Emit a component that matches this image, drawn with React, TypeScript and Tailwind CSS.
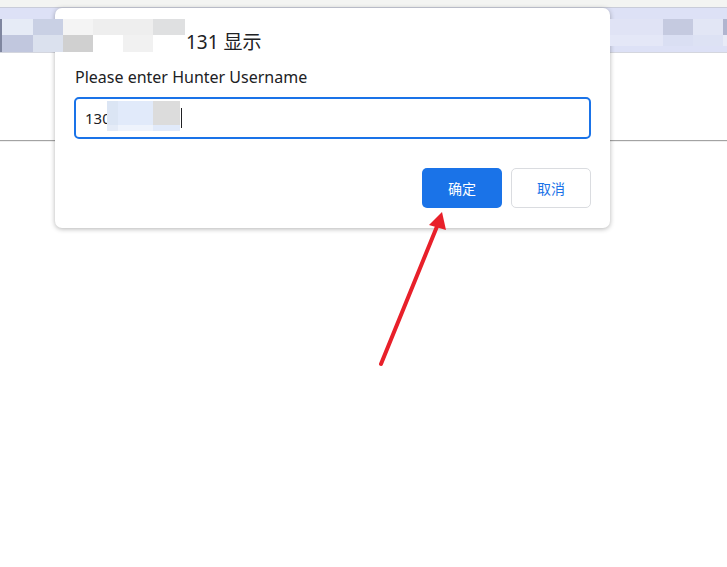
import React from "react";

const LEFT_TOP = ["#e6ebf6", "#c9d0e4", "#f4f4f4", "#eeeeee", "#eeeeee", "#dfe0e1"];
const LEFT_BOTTOM = ["#c1c7de", "#dbe1ee", "#d0d0d0", "#ffffff", "#f1f1f1", "#ffffff"];
const LEFT_W = [33, 30, 30, 30, 30, 32];

const RIGHT_TOP = ["#e0e3f5", "#e0e3f5", "#c5cae0", "#e2e6f5", "#b0b5cf"];
const RIGHT_BOTTOM = ["#e4e7f7", "#e4e7f7", "#dadff3", "#dde2f4", "#e8ebf7"];
const RIGHT_W = [23, 30, 30, 30, 4];

function Mosaic({ widths, top, bottom, h1, h2 }: { widths: number[]; top: string[]; bottom: string[]; h1: number; h2: number }) {
  return (
    <div className="flex flex-col">
      <div className="flex">
        {widths.map((w, i) => (
          <div key={i} style={{ width: w, height: h1, background: top[i] }} />
        ))}
      </div>
      <div className="flex">
        {widths.map((w, i) => (
          <div key={i} style={{ width: w, height: h2, background: bottom[i] }} />
        ))}
      </div>
    </div>
  );
}

export default function App() {
  return (
    <div className="relative w-[727px] h-[567px] overflow-hidden bg-white" style={{ fontFamily: '"Segoe UI", "Noto Sans", "Noto Sans CJK SC", sans-serif' }}>
      {/* browser page behind the dialog */}
      <div className="h-[7px] bg-[#f3f4f2]" />
      <div className="h-[46px] bg-[#dde1f6] border-t border-[#c9ccd9] border-b border-b-[#d4d6de]" />
      <div className="h-[88px] bg-white border-b border-[#a3a3a3]" />
      <div className="h-px bg-[#efefef]" />

      {/* redaction blocks */}
      <div className="absolute left-0 top-[19px] z-20">
        <Mosaic widths={LEFT_W} top={LEFT_TOP} bottom={LEFT_BOTTOM} h1={16} h2={17} />
        <div className="absolute left-0 top-0 w-[2px] h-[33px] bg-[#7f869f]" />
      </div>
      <div className="absolute left-[610px] top-[19px] z-20">
        <Mosaic widths={RIGHT_W} top={RIGHT_TOP} bottom={RIGHT_BOTTOM} h1={16} h2={11} />
      </div>

      {/* dialog */}
      <div className="absolute left-[55px] top-[8px] z-10 w-[555px] h-[220px] rounded-[7px] bg-white shadow-[0_1px_5px_rgba(0,0,0,0.3)] px-[19px] pt-[22px]">
        <div className="pl-[112px] text-[19px] leading-6 text-[#202124]">131 显示</div>
        <div className="mt-[13px] pl-px text-[16px] leading-5 text-[#202124]">Please enter Hunter Username</div>
        <div className="relative mt-[10px] h-[42px] w-[517px] rounded-[5px] border-2 border-[#1a73e8] flex items-center pl-[9px] text-[15px] text-[#202124]">
          <span>130</span>
          <div className="absolute left-[31px] top-[2px] flex flex-col">
            <div className="flex">
              <div className="w-[11px] h-[24px] bg-[#dbe5f4]" />
              <div className="w-[35px] h-[24px] bg-[#e1eafa]" />
              <div className="w-[27px] h-[24px] bg-[#dcdcdc]" />
            </div>
            <div className="flex">
              <div className="w-[11px] h-[6px] bg-[#e4ebf7]" />
              <div className="w-[35px] h-[6px] bg-[#eef3fc]" />
              <div className="w-[27px] h-[6px] bg-[#e1eafa]" />
            </div>
          </div>
          <div className="absolute left-[105px] top-[9px] w-px h-[20px] bg-[#202124]" />
        </div>
        <div className="mt-[29px] w-[517px] flex justify-end gap-[9px]">
          <button className="w-[80px] h-[40px] rounded-[5px] bg-[#1a73e8] text-white text-[14px]">确定</button>
          <button className="w-[80px] h-[40px] rounded-[5px] bg-white border border-[#dadce0] text-[#1a73e8] text-[14px]">取消</button>
        </div>
      </div>

      {/* annotation arrow */}
      <svg className="absolute left-0 top-0 z-30" width="727" height="567" viewBox="0 0 727 567">
        <line x1="381" y1="364" x2="438" y2="224" stroke="#e8202a" strokeWidth="4" strokeLinecap="round" />
        <polygon points="442,212 429,225 446,230" fill="#e8202a" />
      </svg>
    </div>
  );
}
